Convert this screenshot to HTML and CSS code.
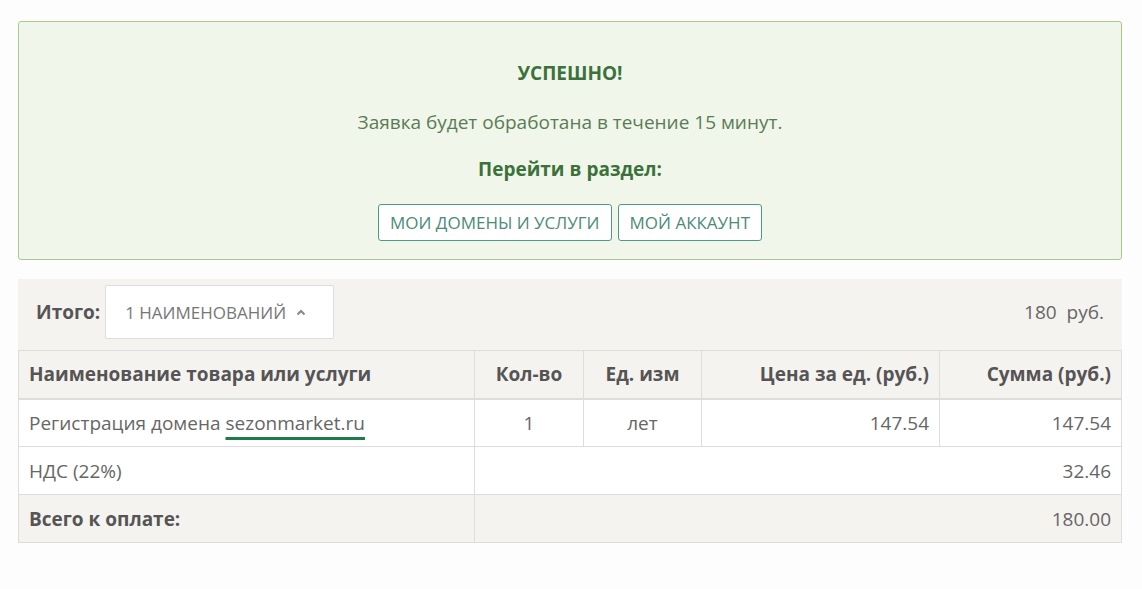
FILE: index.html
```html
<!DOCTYPE html>
<html>

<head>
    <title>Заказ оформлен</title>
    <link rel="stylesheet" href="styles.css">
</head>

<body>
    <div class="page">
        <div class="alert">
            <div class="alert-title">УСПЕШНО!</div>
            <div class="alert-text">Заявка будет обработана в течение 15 минут.</div>
            <div class="alert-title alert-sub">Перейти в раздел:</div>
            <div class="alert-buttons">
                <a class="btn" href="#">МОИ ДОМЕНЫ И УСЛУГИ</a>
                <a class="btn" href="#">МОЙ АККАУНТ</a>
            </div>
        </div>

        <div class="summary">
            <span class="summary-label">Итого:</span>
            <button class="dropdown" type="button">
                1 НАИМЕНОВАНИЙ
                <svg width="10" height="7" viewBox="0 0 10 7">
                    <polyline points="1.5,5.5 5,2 8.5,5.5" fill="none" stroke="#888" stroke-width="2" />
                </svg>
            </button>
            <span class="summary-total">180&nbsp; руб.</span>
        </div>

        <table class="order">
            <colgroup>
                <col style="width: 456px">
                <col style="width: 109px">
                <col style="width: 118px">
                <col style="width: 238px">
                <col>
            </colgroup>
            <tr class="head">
                <th>Наименование товара или услуги</th>
                <th class="center">Кол-во</th>
                <th class="center">Ед. изм</th>
                <th class="right">Цена за ед. (руб.)</th>
                <th class="right">Сумма (руб.)</th>
            </tr>
            <tr>
                <td>Регистрация домена <span class="mark">sezonmarket.ru</span></td>
                <td class="center">1</td>
                <td class="center">лет</td>
                <td class="right">147.54</td>
                <td class="right">147.54</td>
            </tr>
            <tr>
                <td>НДС (22%)</td>
                <td class="right" colspan="4">32.46</td>
            </tr>
            <tr class="foot">
                <td class="bold">Всего к оплате:</td>
                <td class="right" colspan="4">180.00</td>
            </tr>
        </table>
    </div>
</body>

</html>
```

FILE: styles.css
```css
body {
    font-family: "Open Sans", "Liberation Sans", sans-serif;
    margin: 0;
    padding: 0;
    background-color: #fdfdfd;
    color: #666;
}

.page {
    padding: 21px 20px 0 18px;
}

/* success message */
.alert {
    background-color: #f0f7ea;
    border: 1px solid #a9c98c;
    border-radius: 3px;
    padding: 39px 20px 18px;
    text-align: center;
}

.alert-title {
    font-size: 19px;
    line-height: 24px;
    font-weight: bold;
    color: #3c713b;
}

.alert-text {
    margin-top: 25px;
    font-size: 19px;
    line-height: 24px;
    color: #5b7b56;
}

.alert-sub {
    margin-top: 23px;
}

.alert-buttons {
    margin-top: 23px;
    display: flex;
    justify-content: center;
    gap: 6px;
}

.btn {
    display: inline-flex;
    align-items: center;
    height: 37px;
    box-sizing: border-box;
    padding: 0 11px;
    background-color: #fff;
    border: 1px solid #4f9a84;
    border-radius: 3px;
    color: #4b8b78;
    font-size: 17px;
    text-decoration: none;
}

/* summary bar */
.summary {
    margin-top: 19px;
    background-color: #f5f3f0;
    display: flex;
    align-items: center;
    padding: 6px 18px 11px 18px;
}

.summary-label {
    font-size: 19px;
    font-weight: bold;
    color: #555;
    margin-right: 5px;
}

.dropdown {
    display: flex;
    align-items: center;
    gap: 10px;
    box-sizing: border-box;
    height: 54px;
    width: 229px;
    padding: 0 19px;
    background-color: #fff;
    border: 1px solid #ddd;
    border-radius: 2px;
    font-family: inherit;
    font-size: 17px;
    color: #777;
}

.summary-total {
    margin-left: auto;
    font-size: 19px;
    color: #666;
}

/* order table */
.order {
    width: 1104px;
    border-collapse: collapse;
    table-layout: fixed;
    font-size: 19px;
}

.order th,
.order td {
    border: 1px solid #ddd;
    height: 48px;
    padding: 0 10px;
    text-align: left;
    box-sizing: border-box;
}

.order th {
    background-color: #f5f3f0;
    color: #555;
    font-weight: bold;
    border-bottom: 2px solid #ddd;
}

.order td {
    background-color: #fff;
}

.order tr.foot td {
    background-color: #f5f3f0;
}

.order .center {
    text-align: center;
}

.order .right {
    text-align: right;
}

.order .bold {
    font-weight: bold;
    color: #555;
}

.mark {
    text-decoration: underline;
    text-decoration-color: #1d7b4c;
    text-decoration-thickness: 3px;
    text-underline-offset: 7px;
}
```
